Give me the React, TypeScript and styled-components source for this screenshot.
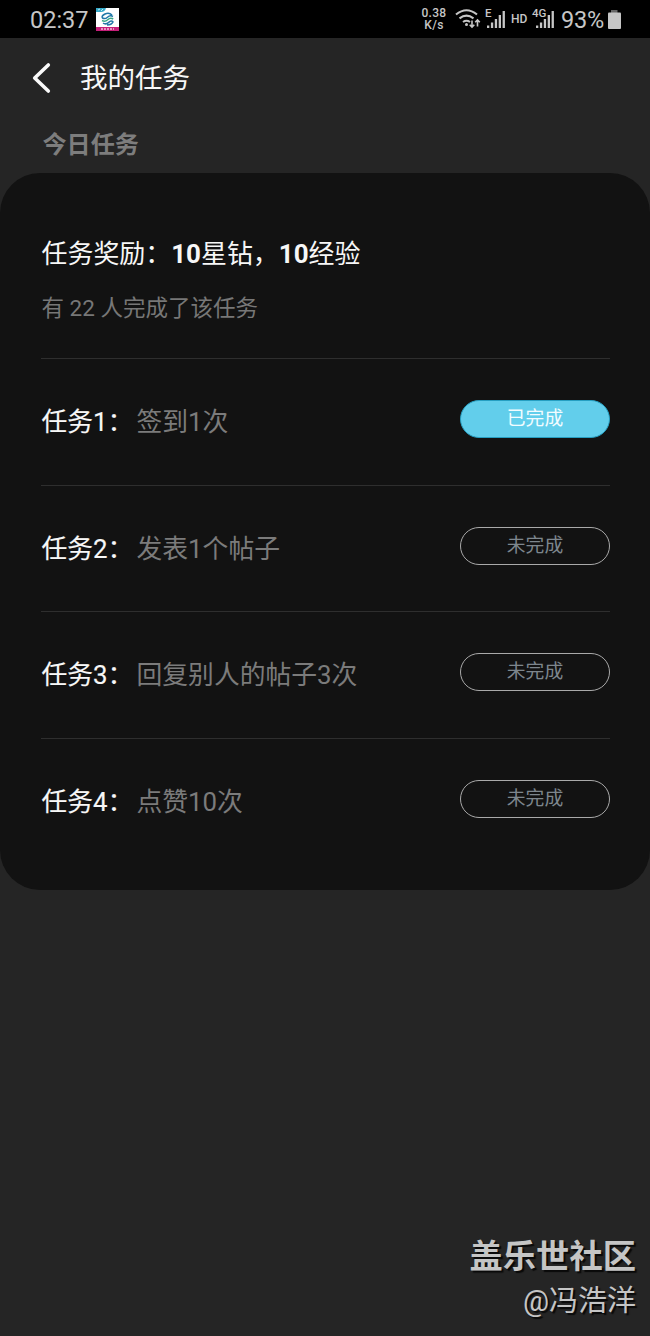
import React from "react";
import styled, { createGlobalStyle, css } from "styled-components";

const GlobalStyle = createGlobalStyle`
  * { box-sizing: border-box; }
  html, body { margin: 0; padding: 0; background: #252525; }
  body { font-family: Roboto, "Noto Sans CJK SC", sans-serif; }
`;

const Page = styled.div`
  display: flex;
  flex-direction: column;
  width: 100%;
  max-width: 650px;
  height: 1336px;
  overflow: hidden;
  background: #252525;
  color: #f7f7f7;
  white-space: nowrap;
`;

const StatusBar = styled.header`
  display: flex;
  justify-content: space-between;
  height: 38px;
  flex: none;
  padding: 0 29px 0 30px;
  background: #000;
  color: #c6c6c6;
`;

const StatusGroup = styled.div`
  display: flex;
  align-items: center;
  height: 38px;
`;

const Clock = styled.span`
  width: 66px;
  font-size: 23.5px;
  line-height: 38px;
  padding-top: 1px;
`;

const NetSpeed = styled.span`
  display: flex;
  flex-direction: column;
  align-items: center;
  width: 26px;
  margin-right: 8px;
  font-size: 12px;
  font-weight: 500;
  line-height: 12px;
  letter-spacing: 0.3px;
`;

const HdLabel = styled.span`
  width: 21px;
  font-size: 12px;
  font-weight: 500;
  line-height: 12px;
`;

const Percent = styled.span`
  width: 47px;
  font-size: 23.5px;
  line-height: 38px;
  letter-spacing: -0.2px;
  padding-top: 1px;
`;

const TitleBar = styled.div`
  display: flex;
  align-items: center;
  flex: none;
  height: 79px;
  padding-left: 31px;
`;

const BackButton = styled.button`
  display: flex;
  width: 49px;
  padding: 0;
  border: 0;
  background: none;
  color: #fafafa;
`;

const Title = styled.h1`
  margin: 0;
  padding-top: 2px;
  font-size: 27.5px;
  font-weight: 400;
  line-height: 40px;
`;

const SectionTitle = styled.h2`
  flex: none;
  height: 56px;
  margin: 0;
  padding: 10px 0 0 42.5px;
  font-size: 24.1px;
  font-weight: 700;
  line-height: 36px;
  color: #7d7d7d;
`;

const Card = styled.main`
  flex: none;
  height: 717px;
  padding: 61px 40px 0 41px;
  border-radius: 40px;
  background: #121212;
`;

const Summary = styled.section`
  height: 124px;
  padding-left: 0.5px;
`;

const Reward = styled.p`
  margin: 0;
  font-size: 25.95px;
  line-height: 40px;
  b { font-weight: 700; }
`;

const Participants = styled.p`
  margin: 17px 0 0;
  font-size: 22.5px;
  line-height: 34px;
  color: #777;
`;

const TaskRow = styled.section`
  display: flex;
  justify-content: space-between;
  height: 126.5px;
  padding: 41px 0 0 0.5px;
  border-top: 1px solid #2e2e2e;
`;

const TaskText = styled.div`
  display: flex;
  padding-top: 2px;
  font-size: 25.8px;
  line-height: 40px;
`;

const TaskLabel = styled.span`
  width: 95px;
  -webkit-text-stroke: 0.15px currentColor;
`;

const TaskDetail = styled.span`
  color: #7b7b7b;
`;

const StatusButton = styled.button<{ $done: boolean }>`
  width: 150px;
  height: 38px;
  padding: 0;
  border-radius: 19px;
  font: 400 18.8px/34px Roboto, "Noto Sans CJK SC", sans-serif;
  ${({ $done }) =>
    $done
      ? css`
          border: 1px solid #269fc2;
          background: #62ceeb;
          color: #f2fcff;
        `
      : css`
          border: 1px solid #a9a9a9;
          background: transparent;
          color: #7d868d;
        `}
`;

const Signature = styled.footer`
  display: flex;
  flex-direction: column;
  align-items: flex-end;
  margin-top: auto;
  height: 103px;
  padding-right: 14px;
  color: #c5c5c5;
  text-shadow: 2px 2px 1px #090909;
`;

const Community = styled.strong`
  font-size: 33.3px;
  font-weight: 700;
  line-height: 48px;
`;

const Author = styled.span`
  font-size: 29px;
  line-height: 40px;
`;

const OperatorIcon = () => (
  <svg width="23" height="23" viewBox="0 0 23 23">
    <path fill="#fff" d="M0 0h23v23H0z" />
    <path fill="#35a9c9" d="M0 0h10q-1 4-5 4H0z" />
    <path d="m2 2 2-1m1 2 2-2" stroke="#b9edf5" fill="none" />
    <g fill="none" strokeWidth="1.5">
      <path stroke="#2278a8" d="M16 7q-3-3-7-1T6.500 10q2.500 1.500 5-.8t5.500-.7" />
      <path stroke="#39a985" d="M6 12.500q3 1.700 5.700-.8t5.500-.7" />
      <path stroke="#2478a8" d="M7 15.200q3 1.700 5.700-.8t4.300-.5Q15.500 17 11 17" />
    </g>
    <path fill="#c51f79" d="M0 19h23v4H0z" />
    <path stroke="#f1bad9" strokeWidth="1.5" strokeDasharray="2 1" d="M5 21h13" />
  </svg>
);

const WifiIcon = () => (
  <svg width="30" height="24" viewBox="0 0 30 24" fill="none" stroke="#c6c6c6" strokeWidth="2.1">
    <path d="M1 7.500q10.500-8.500 21 0M4.500 11.300q7-5.500 14 0M8 15q3.500-2.500 7 0" />
    <circle cx="11.500" cy="17.500" r="1.500" fill="#c6c6c6" stroke="none" />
    <path strokeWidth="1.600" d="M17 13.500V20m-2.300-2.300L17 20l2.300-2.300M22.500 19.500V13m-2.300 2.300L22.500 13l2.300 2.300" />
  </svg>
);

const SignalLabel = styled.span`
  position: absolute;
  left: 0;
  top: -3px;
  font-size: 11.5px;
  font-weight: 500;
  line-height: 12px;
`;

const SignalBox = styled.span<{ $width: number; $gap: number }>`
  position: relative;
  display: flex;
  justify-content: flex-end;
  width: ${(p) => p.$width}px;
  height: 19px;
  margin-right: ${(p) => p.$gap}px;
`;

const Signal = ({ label, width, gap }: { label: string; width: number; gap: number }) => (
  <SignalBox $width={width} $gap={gap}>
    <SignalLabel>{label}</SignalLabel>
    <svg width="18" height="19" viewBox="0 0 18 19" fill="#c6c6c6">
      <path d="M0 15.500h2.300V18H0zM3.900 12.500h2.300V18H3.900zM7.800 9h2.300v9H7.800zM11.700 5H14v13h-2.300zM15.600 1h2.300v17h-2.300z" />
    </svg>
  </SignalBox>
);

const BatteryIcon = () => (
  <svg width="13" height="19" viewBox="0 0 13 19">
    <path fill="#666" d="M3 0h6.500v3H3z" />
    <path fill="#c6c6c6" d="M1 2.500h11q1 0 1 1V18q0 1-1 1H1q-1 0-1-1V3.500q0-1 1-1" />
  </svg>
);

const BackIcon = () => (
  <svg width="20" height="32" viewBox="0 0 20 32" fill="none">
    <path d="M17.300 3 3.700 16l13.600 13" stroke="currentColor" strokeWidth="3.600" strokeLinecap="round" strokeLinejoin="round" />
  </svg>
);

const tasks = [
  { detail: "签到1次", done: true },
  { detail: "发表1个帖子", done: false },
  { detail: "回复别人的帖子3次", done: false },
  { detail: "点赞10次", done: false },
];

export default function App() {
  return (
    <>
      <GlobalStyle />
      <Page lang="zh-CN">
        <StatusBar>
          <StatusGroup>
            <Clock>02:37</Clock>
            <OperatorIcon />
          </StatusGroup>
          <StatusGroup>
            <NetSpeed>
              <span>0.38</span>
              <span>K/s</span>
            </NetSpeed>
            <WifiIcon />
            <Signal label="E" width={20} gap={6} />
            <HdLabel>HD</HdLabel>
            <Signal label="4G" width={22} gap={7} />
            <Percent>93%</Percent>
            <BatteryIcon />
          </StatusGroup>
        </StatusBar>
        <TitleBar>
          <BackButton aria-label="返回">
            <BackIcon />
          </BackButton>
          <Title>我的任务</Title>
        </TitleBar>
        <SectionTitle>今日任务</SectionTitle>
        <Card>
          <Summary>
            <Reward>
              任务奖励：<b>10</b>星钻，<b>10</b>经验
            </Reward>
            <Participants>有 22 人完成了该任务</Participants>
          </Summary>
          {tasks.map((task, index) => (
            <TaskRow key={task.detail}>
              <TaskText>
                <TaskLabel>任务{index + 1}：</TaskLabel>
                <TaskDetail>{task.detail}</TaskDetail>
              </TaskText>
              <StatusButton $done={task.done}>{task.done ? "已完成" : "未完成"}</StatusButton>
            </TaskRow>
          ))}
        </Card>
        <Signature>
          <Community>盖乐世社区</Community>
          <Author>@冯浩洋</Author>
        </Signature>
      </Page>
    </>
  );
}
